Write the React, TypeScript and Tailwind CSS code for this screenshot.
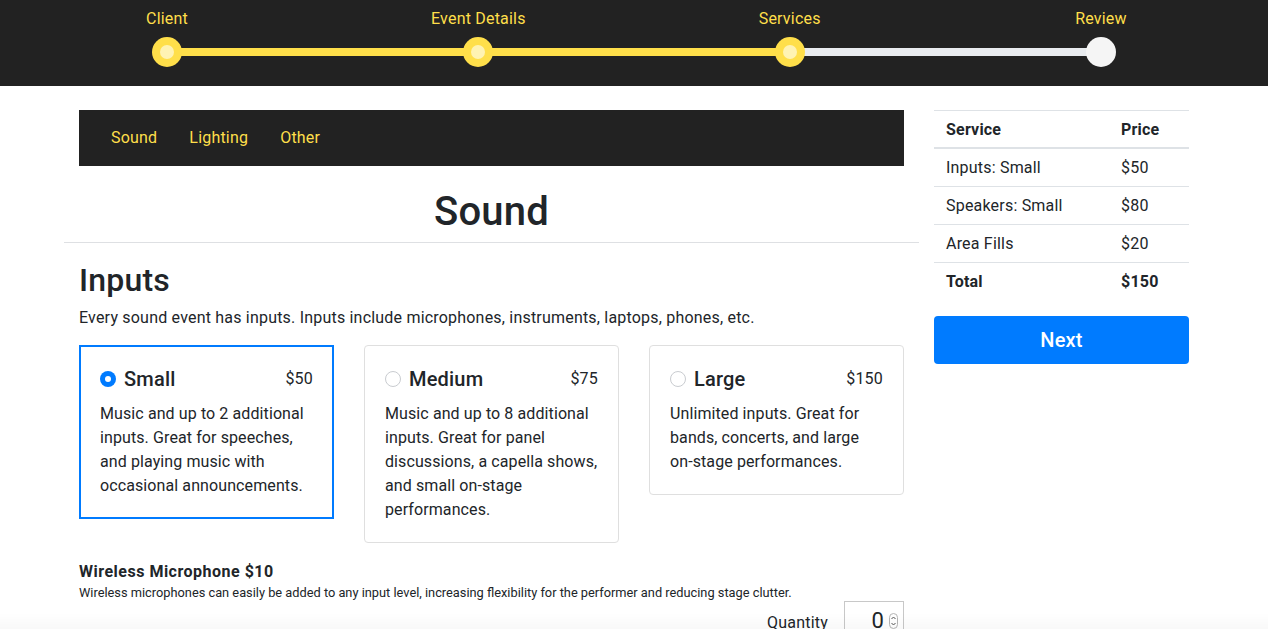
import { useState } from 'react';

const steps = ['Client', 'Event Details', 'Services', 'Review'];
const currentStep = 2;

const inputOptions = [
  {
    id: 'small',
    label: 'Small',
    price: '$50',
    text: 'Music and up to 2 additional inputs. Great for speeches, and playing music with occasional announcements.',
  },
  {
    id: 'medium',
    label: 'Medium',
    price: '$75',
    text: 'Music and up to 8 additional inputs. Great for panel discussions, a capella shows, and small on-stage performances.',
  },
  {
    id: 'large',
    label: 'Large',
    price: '$150',
    text: 'Unlimited inputs. Great for bands, concerts, and large on-stage performances.',
  },
];

const summaryRows = [
  { service: 'Inputs: Small', price: '$50' },
  { service: 'Speakers: Small', price: '$80' },
  { service: 'Area Fills', price: '$20' },
];

function Stepper() {
  return (
    <header className="h-[86px] bg-[#222222]">
      <div className="mx-auto w-[964px] pt-[7px]">
        <div className="flex justify-between">
          {steps.map((step) => (
            <div className="flex w-[30px] justify-center" key={step}>
              <span className="whitespace-nowrap text-base leading-6 text-[#ffdf4a]">
                {step}
              </span>
            </div>
          ))}
        </div>
        <div className="mt-[6px] flex items-center">
          {steps.map((step, index) => {
            const isDone = index <= currentStep;
            return (
              <div className={index === 0 ? 'flex items-center' : 'flex flex-1 items-center'} key={step}>
                {index > 0 && (
                  <div
                    className={[
                      '-mx-px h-2 flex-1',
                      index <= currentStep ? 'bg-[#ffdf4a]' : 'bg-[#e9ecef]',
                    ].join(' ')}
                  />
                )}
                <div
                  className={[
                    'relative z-10 flex h-[30px] w-[30px] items-center justify-center rounded-full',
                    isDone ? 'bg-[#ffdf4a]' : 'bg-[#f5f5f5]',
                  ].join(' ')}
                >
                  {isDone && <div className="h-[14px] w-[14px] rounded-full bg-[#fff3b3]" />}
                </div>
              </div>
            );
          })}
        </div>
      </div>
    </header>
  );
}

function Radio({ checked }: { checked: boolean }) {
  return checked ? (
    <span className="flex h-4 w-4 shrink-0 items-center justify-center rounded-full bg-[#007bff]">
      <span className="h-[6px] w-[6px] rounded-full bg-white" />
    </span>
  ) : (
    <span className="h-4 w-4 shrink-0 rounded-full border border-[#c9ccd0] bg-white" />
  );
}

function OptionCard({
  option,
  selected,
  onSelect,
}: {
  option: (typeof inputOptions)[number];
  selected: boolean;
  onSelect: () => void;
}) {
  return (
    <button
      className={[
        'block p-5 text-left',
        selected
          ? 'border-2 border-[#007bff] p-[19px]'
          : 'rounded border border-[#dfdfdf]',
      ].join(' ')}
      onClick={onSelect}
      type="button"
    >
      <div className="mb-3 flex items-center justify-between pt-px">
        <div className="flex items-center gap-2">
          <Radio checked={selected} />
          <span className="text-xl font-medium leading-6">{option.label}</span>
        </div>
        <span className="text-base leading-6">{option.price}</span>
      </div>
      <p className="-mt-px text-base leading-6 tracking-[0.1px]">{option.text}</p>
    </button>
  );
}

export default function App() {
  const [selected, setSelected] = useState('small');

  return (
    <div className="min-h-screen bg-white tracking-[0.2px] text-[#212529] [font-family:Roboto,'Liberation_Sans',sans-serif]">
      <Stepper />

      <div className="mx-auto flex w-[1140px]">
        <main className="w-[855px] px-[15px] pt-6">
          <nav className="flex h-14 items-center bg-[#222222] px-4">
            {['Sound', 'Lighting', 'Other'].map((item) => (
              <a className="px-4 text-base leading-6 text-[#ffdf4a]" href="#" key={item}>
                {item}
              </a>
            ))}
          </nav>

          <h1 className="mt-[22px] text-center text-[40px] font-medium leading-[48px]">Sound</h1>
          <hr className="-mx-[15px] mt-[6px] border-t border-[#dee0e3]" />

          <h2 className="mt-[18px] text-[32px] font-medium leading-[38px]">Inputs</h2>
          <p className="mt-[7px] text-base leading-6">
            Every sound event has inputs. Inputs include microphones, instruments, laptops, phones, etc.
          </p>

          <div className="mt-[15px] grid grid-cols-3 items-start gap-[30px]">
            {inputOptions.map((option) => (
              <OptionCard
                key={option.id}
                onSelect={() => setSelected(option.id)}
                option={option}
                selected={selected === option.id}
              />
            ))}
          </div>

          <h3 className="mt-[17px] text-base font-bold leading-6 tracking-[0.5px]">Wireless Microphone $10</h3>
          <p className="text-[12.8px] leading-[17px] tracking-normal">
            Wireless microphones can easily be added to any input level, increasing flexibility for the performer and reducing stage clutter.
          </p>

          <div className="flex items-start justify-end gap-4">
            <span className="mt-[10px] text-base leading-6">Quantity</span>
            <div className="flex h-[40px] w-[60px] items-center justify-end gap-[5px] border border-[#c8c8c8] pr-[5px]">
              <span className="text-[22px] leading-none">0</span>
              <svg className="h-[16px] w-[9px]" viewBox="0 0 9 16" fill="none">
                <rect x="0.5" y="0.5" width="8" height="15" rx="4" stroke="#b5b5b5" />
                <path d="M2.5 6 4.5 4 6.5 6" stroke="#555" strokeWidth="1" />
                <path d="M2.5 10 4.5 12 6.5 10" stroke="#555" strokeWidth="1" />
              </svg>
            </div>
          </div>
        </main>

        <aside className="w-[285px] px-[15px] pt-6">
          <table className="w-full border-collapse text-base leading-6">
            <thead>
              <tr className="border-t border-[#dee2e6]">
                <th className="w-[175px] border-b-2 border-[#dee2e6] px-3 pt-[7px] pb-[5px] text-left font-bold">
                  Service
                </th>
                <th className="border-b-2 border-[#dee2e6] px-3 pt-[7px] pb-[5px] text-left font-bold">Price</th>
              </tr>
            </thead>
            <tbody>
              {summaryRows.map((row, index) => (
                <tr className={index === 0 ? '' : 'border-t border-[#dee2e6]'} key={row.service}>
                  <td className="px-3 py-[6.5px]">{row.service}</td>
                  <td className="px-3 py-[6.5px]">{row.price}</td>
                </tr>
              ))}
              <tr className="border-t border-[#dee2e6]">
                <td className="px-3 py-[6.5px] font-bold">Total</td>
                <td className="px-3 py-[6.5px] font-bold">$150</td>
              </tr>
            </tbody>
          </table>

          <button
            className="mt-4 h-12 w-full rounded bg-[#007bff] text-xl font-medium text-white"
            type="button"
          >
            Next
          </button>
        </aside>
      </div>

      <div className="pointer-events-none fixed inset-x-0 bottom-0 h-[16px] bg-gradient-to-b from-black/0 to-black/[0.025]" />
    </div>
  );
}
